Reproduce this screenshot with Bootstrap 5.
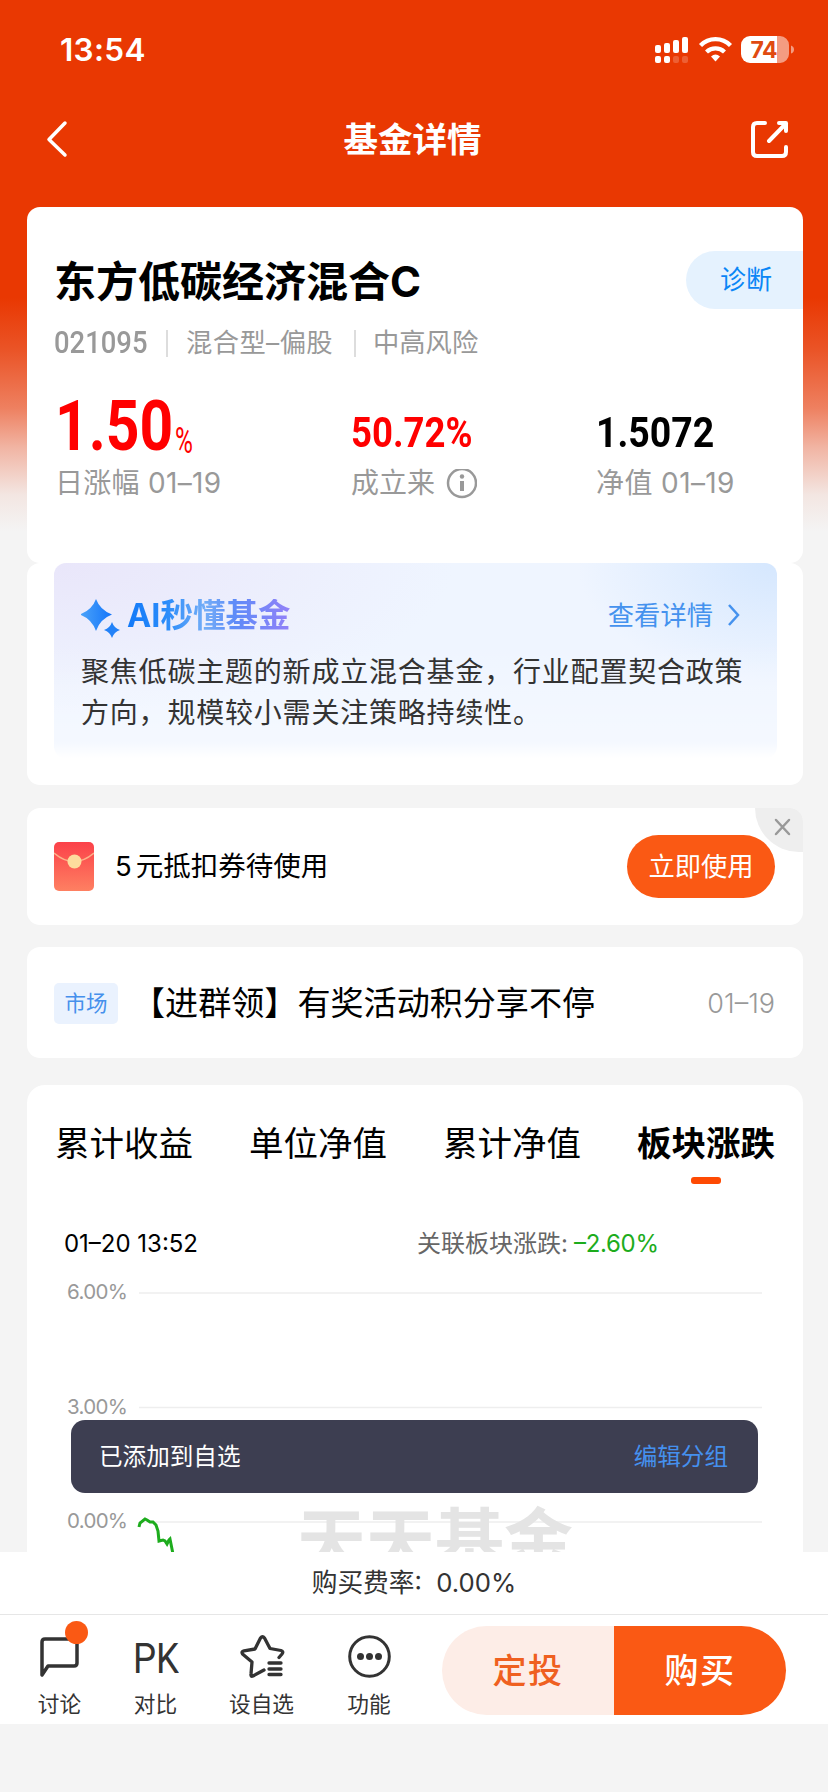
<!DOCTYPE html>
<html lang="zh-CN">
<head>
<meta charset="utf-8">
<meta name="viewport" content="width=device-width, initial-scale=1">
<title>基金详情</title>
<link href="https://cdn.jsdelivr.net/npm/bootstrap@5.3.0/dist/css/bootstrap.min.css" rel="stylesheet">
<style>
body{margin:0;background:#f4f4f4;font-family:Inter,"Noto Sans CJK SC",sans-serif;color:#000;font-size:26px;line-height:1}
svg{display:block;flex:none}
.screen{width:828px;height:1792px;overflow:hidden;background:linear-gradient(180deg,#e93802 0,#e93802 298px,#ea5427 350px,#ee8060 408px,#f1b5a4 448px,#f3e6e2 495px,#f4f4f4 532px)}
.nw{white-space:nowrap}
.status{height:96px;padding:4px 33px 0 60px;color:#fff}
.clock{font-size:31.5px;font-weight:600;letter-spacing:.3px}
.topnav{height:111px;padding:0 39px 24px 45px;color:#fff}
.topnav h1{font-size:34.5px;font-weight:700;line-height:1;margin:2px 0 0 -15px}
.body-col{padding:0 25px 0 27px;height:1345px;overflow:hidden}
.panel{background:#fff;border-radius:13px}
.summary{height:356px;padding-top:44px}
.fund{font-size:42px;font-weight:700;padding-left:27px;line-height:62px;height:58px;margin:0}
.diag{width:117px;height:58px;background:#e5f2fe;color:#0b86f6;border-radius:29px 0 0 29px;font-size:26px;line-height:54px;padding-left:34px;border:0;text-align:left}
.din{font-family:Roboto,sans-serif;display:inline-block;transform:scaleX(.87);transform-origin:0 50%;white-space:nowrap}
.meta{height:30px;margin-top:19px;padding-left:27px;color:#999;font-size:26.3px}
.bar-sep{width:2px;height:27px;background:#ddd}
.stats{height:132px;margin-top:24px}
.stat-v{height:84px;color:#f00;font-weight:700;font-size:43px;line-height:50px}
.stat-l{color:#999;font-size:28px;line-height:34px}
.ai{margin:0 26px 0 27px;height:195px;border-radius:12px;padding:36px 27px 0;background:linear-gradient(180deg,rgba(255,255,255,0) 40%,rgba(255,255,255,.35) 92%,#fff 100%),radial-gradient(ellipse 200px 120px at 100% 0,#d5e7fe,rgba(213,231,254,0)),radial-gradient(ellipse 400px 150px at 0 0,#e9e6fa,rgba(240,240,254,0)),#eff5ff}
.ai-t{font-size:32.5px;font-weight:700;background:linear-gradient(90deg,#1279f8,#2c8dfa 25%,#73adf7 48%,#5e8bf8 66%,#9281f8);-webkit-background-clip:text;background-clip:text;color:transparent;line-height:34px;height:38px;margin-left:-1px}
.ai-p{font-size:28px;letter-spacing:.8px;line-height:40.5px;color:#333;margin:13px -10px 0 0}
.coupon{height:117px;margin-top:23px;padding:0 28px 0 27px}
.coupon-x{right:0;top:0;width:48px;height:44px;background:#eee;border-radius:0 13px 0 44px}
.use{width:148px;height:63px;border-radius:32px;background:#fa5914;color:#fff;border:0;font-size:26.3px;line-height:60px;padding:0}
.news{height:111px;margin-top:22px;padding:1px 28px 0 27px}
.tag{width:64px;height:41px;border-radius:5px;background:#eaf2fe;color:#4590ec;font-size:21.5px;line-height:41px;text-align:center}
.trend{margin-top:27px;height:500px;border-radius:18px 18px 0 0}
.tabs{padding:37px 28px 0 28px;height:103px;font-size:34.5px;line-height:44px}
.tab-on{font-weight:700}
.tab-on i{display:block;width:30px;height:7px;border-radius:3px;background:#fe4a03;margin:11px auto 0}
.toast-bar{left:71px;top:1420px;width:687px;height:73px;border-radius:14px;background:#3d3e51;color:#fff;font-size:23.6px;padding:0 30px 0 28px}
.dock{background:#fff;height:172px}
.fee{height:63px;border-bottom:1px solid #e6e6e6;color:#333;font-size:25.7px;line-height:61px}
.acts{height:109px;color:#333;font-size:21.7px}
.act{padding-top:20px}
.act svg{margin:0 auto}
.act span{display:block;line-height:28px;margin-top:12px}
.dot{width:23px;height:23px;border-radius:50%;background:#fa5914;left:65px;top:6px}
.half{width:172px;height:89px;border:0;font-size:34px;font-weight:500;letter-spacing:1.5px;line-height:90px;padding:0}
</style>
</head>
<body>
<div class="screen position-relative">
  <div class="status d-flex align-items-center justify-content-between">
    <span class="clock">13:54</span>
    <svg width="141" height="28" viewBox="0 0 141 28" fill="#fff">
      <rect x="1" y="9" width="6" height="8" rx="2"/><rect x="10" y="7" width="6" height="10" rx="2"/><rect x="19" y="4" width="6" height="13" rx="2"/><rect x="28" y="1" width="6" height="16" rx="2"/>
      <rect x="1" y="20" width="6" height="7" rx="2"/><rect x="10" y="20" width="6" height="7" rx="2"/><rect x="19" y="20" width="6" height="7" rx="2" opacity=".2"/><rect x="28" y="20" width="6" height="7" rx="2" opacity=".2"/>
      <g fill="none" stroke="#fff" stroke-width="4.300"><path d="M46.500 9.500a21 21 0 0 1 30 0"/><path d="M52.500 16a13 13 0 0 1 18 0"/></g><path d="M57 20.500q4.500-3.800 9 0l-4.500 5z"/>
      <path d="M96 0h27v27H96a9 9 0 0 1-9-9V9a9 9 0 0 1 9-9z"/><path d="M123 0h3a9 9 0 0 1 9 9v9a9 9 0 0 1-9 9h-3zM137 9.500q3 1 3 4t-3 4z" opacity=".5"/>
      <text x="96.500" y="22" font-size="23" font-weight="700" font-family="Inter" fill="#e04a10" textLength="27">74</text>
    </svg>
  </div>
  <div class="topnav d-flex align-items-center justify-content-between">
    <svg width="44" height="40" fill="none" stroke="#fff" stroke-width="3.500" stroke-linecap="round" stroke-linejoin="round"><path d="M20 3L4 19.500 20 35"/></svg>
    <h1>基金详情</h1>
    <svg width="38" height="38" fill="none" stroke="#fff" stroke-width="4" stroke-linecap="round" stroke-linejoin="round"><path d="M14 2H6Q2 2 2 6V31Q2 35 6 35H31Q35 35 35 31V26M28 2h7v8M35 2.500L18 20"/></svg>
  </div>
  <main class="body-col">
    <section class="panel summary">
      <div class="d-flex justify-content-between">
        <h2 class="fund nw">东方低碳经济混合C</h2><button class="diag">诊断</button>
      </div>
      <div class="meta d-flex align-items-center nw">
        <div style="width:112px"><span class="din fw-medium" style="font-size:31.500px">021095</span></div><div class="bar-sep"></div>
        <span style="margin-left:18px;width:150px;letter-spacing:.4px">混合型–偏股</span><div class="bar-sep" style="margin-left:18px"></div><span style="margin-left:17px">中高风险</span>
      </div>
      <div class="stats d-flex nw">
        <div style="width:324px;padding-left:28px"><div class="stat-v d-flex" style="padding-top:19px"><span class="din" style="font-size:70px;width:120px;transform:scaleX(.84)">1.50</span><span class="din" style="font-size:36px;font-weight:400;transform:translateY(15px) scaleX(.68)">%</span></div><div class="stat-l" style="letter-spacing:.3px">日涨幅 01–19</div></div>
        <div style="width:245px"><div class="stat-v" style="padding-top:24px"><span class="din" style="transform:scaleX(.85)">50.72%</span></div><div class="stat-l d-flex">成立来<svg width="32" height="32" style="margin:3px 0 0 10px" fill="none" stroke="#999"><circle cx="17" cy="14" r="14" stroke-width="2.500"/><path d="M17 12v10" stroke-width="4"/><circle cx="17" cy="7.500" r="2.200" fill="#999" stroke="none"/></svg></div></div>
        <div><div class="stat-v text-black" style="padding-top:24px"><span class="din">1.5072</span></div><div class="stat-l" style="letter-spacing:.4px">净值 01–19</div></div>
      </div>
    </section>
    <section class="panel" style="height:222px">
      <div class="ai">
        <div class="d-flex align-items-start">
          <svg width="47" height="40"><defs><linearGradient id="g"><stop stop-color="#4ba3f9"/><stop offset="1" stop-color="#1475fa"/></linearGradient></defs><path d="M15 0Q19 11 31 15.500 19 20 15 32 11 20-1 15.500 11 11 15 0Z" fill="url(#g)"/><path d="M31 23Q33 29 39 31 33 33 31 39 29 33 23 31 29 29 31 23Z" fill="#2382f8"/></svg>
          <span class="ai-t nw">AI秒懂基金</span>
          <span class="ms-auto nw" style="color:#4592ee;line-height:33px;font-size:26.300px">查看详情</span>
          <svg width="28" height="34" style="margin:0 3px 0 6px" fill="none" stroke="#4592ee" stroke-width="2.500"><path d="M10 6l9 10-9 10"/></svg>
        </div>
        <p class="ai-p">聚焦低碳主题的新成立混合基金，行业配置契合政策<br>方向，规模较小需关注策略持续性。</p>
      </div>
    </section>
    <section class="panel coupon d-flex align-items-center position-relative">
      <svg width="40" height="49"><defs><linearGradient id="r" x2="0" y2="1"><stop stop-color="#fb4149"/><stop offset="1" stop-color="#fe8062"/></linearGradient></defs><rect width="40" height="49" rx="5" fill="url(#r)"/><path d="M0 11Q20 28 40 11" fill="none" stroke="#fdb28a" stroke-width="1.500"/><circle cx="20.500" cy="19.500" r="7" fill="#fddc9d"/></svg>
      <span class="nw" style="margin-left:21px;font-size:27.500px">5<span style="margin-left:4px">元抵扣券待使用</span></span>
      <button class="use ms-auto">立即使用</button>
      <div class="coupon-x position-absolute"><svg width="48" height="44" stroke="#999" stroke-width="2.500" stroke-linecap="round"><path d="M21 12l13 14M34 12L21 26"/></svg></div>
    </section>
    <section class="panel news d-flex align-items-center nw">
      <span class="tag">市场</span><span style="margin-left:14px;font-size:33.100px;padding-top:1px">【进群领】有奖活动积分享不停</span>
      <span class="ms-auto" style="color:#999;font-weight:300;font-size:27px">01–19</span>
    </section>
    <section class="panel trend">
      <div class="tabs d-flex justify-content-between nw"><span>累计收益</span><span>单位净值</span><span>累计净值</span><span class="tab-on">板块涨跌<i></i></span></div>
      <svg width="776" height="364" font-family="Inter, Noto Sans CJK SC, sans-serif">
        <g font-size="24"><text x="37" y="64" textLength="134">01–20 13:52</text><text x="390" y="64" fill="#666" textLength="151">关联板块涨跌:</text><text x="547" y="64" fill="#1dac1d" textLength="85">–2.60%</text></g>
        <g stroke="#eee" stroke-width="1.500"><path d="M112 105H735M112 219.500H735M112 334H735"/></g>
        <text x="270" y="378" font-size="69" font-weight="700" fill="#e4e4e4" textLength="276">天天基金</text>
        <g font-size="20.500" fill="#999"><text x="40" y="111" textLength="61">6.00%</text><text x="40" y="225.500" textLength="61">3.00%</text><text x="40" y="340" textLength="61">0.00%</text></g>
        <path d="M112 339l1-4 5-4 2 1 3 2 3 0 3 3 2 6 1 10 4-1 2 1 2 3 2-4 1-1 3 15" fill="none" stroke="#1dac1d" stroke-width="3"/>
      </svg>
    </section>
  </main>
  <footer class="dock">
    <div class="fee text-center nw"><span>购买费率:&nbsp; 0.00%</span></div>
    <div class="acts d-flex text-center position-relative nw">
      <div class="act" style="width:119px"><svg width="43" height="43" fill="none" stroke="#333" stroke-width="3.500" stroke-linejoin="round"><path d="M4 40V7Q4 4 7 4H36Q39 4 39 7V28Q39 31 36 31H10z"/></svg><span>讨论</span></div>
      <div class="dot position-absolute"></div>
      <div class="act" style="width:73px"><svg width="46" height="43"><text x="0" y="38" font-family="Roboto" font-size="43" fill="#333" textLength="46" lengthAdjust="spacingAndGlyphs">PK</text></svg><span>对比</span></div>
      <div class="act" style="width:139px"><svg width="46" height="43" fill="none" stroke="#333" stroke-width="3.300" stroke-linecap="round" stroke-linejoin="round"><path d="M25 35L14 41Q11.500 42 12 39L13 27 3.500 19Q2 16.500 5 15.800L16 14 21.500 3Q23.500.500 25.500 3L31 13.500 42 15.500Q45 16.500 43 19L40 22.500M30 28H42M30 34H42M30 39.500H42"/></svg><span>设自选</span></div>
      <div class="act" style="width:76px"><svg width="43" height="43" fill="#333"><circle cx="21.500" cy="21.500" r="19.800" fill="none" stroke="#333" stroke-width="3"/><circle cx="12.500" cy="21.500" r="3.500"/><circle cx="21.500" cy="21.500" r="3.500"/><circle cx="30.500" cy="21.500" r="3.500"/></svg><span>功能</span></div>
      <div class="d-flex" style="margin:11px 0 0 35px"><button class="half" style="background:#fdede7;color:#ef6020;border-radius:45px 0 0 45px">定投</button><button class="half" style="background:#fa5914;color:#fff;border-radius:0 45px 45px 0">购买</button></div>
    </div>
  </footer>
  <div class="toast-bar position-absolute d-flex align-items-center justify-content-between nw"><span>已添加到自选</span><span style="color:#4590ee">编辑分组</span></div>
</div>
<script src="https://cdn.jsdelivr.net/npm/bootstrap@5.3.0/dist/js/bootstrap.bundle.min.js"></script>
</body>
</html>
